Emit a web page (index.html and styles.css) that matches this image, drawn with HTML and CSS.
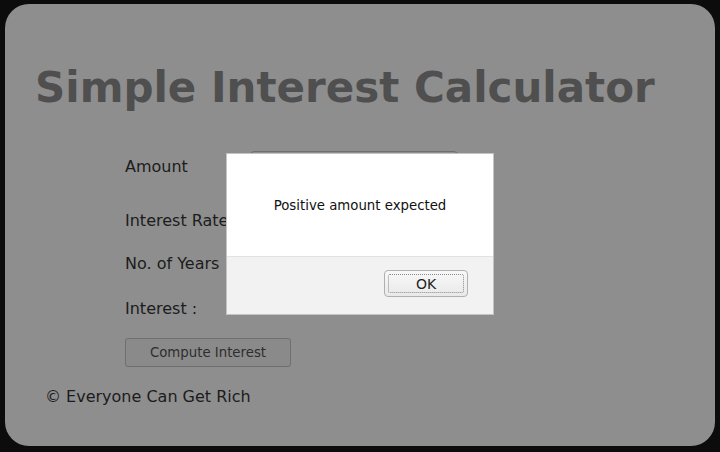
FILE: index.html
```html
<!DOCTYPE html>
<html>
<head>
<meta charset="utf-8">
<link rel="stylesheet" href="styles.css">
</head>
<body>
<div class="panel">
  <h1 class="title">Simple Interest Calculator</h1>
  <div class="form">
    <div class="row row-amount"><span class="label">Amount</span><span class="input"></span></div>
    <div class="row row-rate"><span class="label">Interest Rate</span></div>
    <div class="row row-years"><span class="label">No. of Years</span></div>
    <div class="row row-interest"><span class="label">Interest :</span></div>
    <div class="row row-btn"><button class="compute">Compute Interest</button></div>
  </div>
  <div class="footer">© Everyone Can Get Rich</div>
  <div class="dialog">
    <div class="dialog-body">Positive amount expected</div>
    <div class="dialog-foot"><button class="ok"><span class="ok-ring">OK</span></button></div>
  </div>
</div>
</body>
</html>
```

FILE: styles.css
```css
* { box-sizing: border-box; }
html, body { margin: 0; padding: 0; }
body {
  background: #0c0c0c;
  width: 720px;
  height: 452px;
  overflow: hidden;
  font-family: "DejaVu Sans", sans-serif;
  padding: 4px 5px 6px 5px;
}
.panel {
  position: relative;
  height: 442px;
  background: #8e8e8e;
  border-radius: 24px;
  padding: 59px 0 0 30px;
}
.title {
  margin: 0;
  font-size: 42px;
  font-weight: bold;
  color: #4f4f4f;
  line-height: 50px;
}
.form {
  margin: 0 0 0 90px;
  padding-top: 38px;
  display: flex;
  flex-direction: column;
}
.row {
  display: flex;
  align-items: center;
  font-size: 16px;
  color: #1c1c1c;
}
.label { width: 125px; }
.row-amount { height: 30px; }
.row-rate { height: 30px; margin-top: 24px; }
.row-years { height: 30px; margin-top: 13px; }
.row-interest { height: 30px; margin-top: 15px; }
.row-btn { margin-top: 15px; }
.input {
  width: 208px;
  height: 30px;
  border: 1px solid #6e6e6e;
  border-radius: 4px;
  background: #8e8e8e;
}
.compute {
  width: 166px;
  height: 29px;
  border: 1px solid #6f6f6f;
  border-radius: 3px;
  background: #8a8a8a;
  font-family: "DejaVu Sans", sans-serif;
  font-size: 13.3px;
  color: #2e2e2e;
  padding: 0;
}
.footer {
  margin: 20px 0 0 10px;
  font-size: 16px;
  color: #1c1c1c;
}
.dialog {
  position: absolute;
  left: 221px;
  top: 149px;
  width: 268px;
  height: 162px;
  background: #ffffff;
  border: 1px solid #c4c4c4;
  display: flex;
  flex-direction: column;
}
.dialog-body {
  height: 102px;
  display: flex;
  align-items: center;
  justify-content: center;
  font-size: 13.3px;
  color: #111;
  padding-top: 1px;
}
.dialog-foot {
  flex: 1;
  background: #f2f2f2;
  border-top: 1px solid #e2e2e2;
  display: flex;
  justify-content: flex-end;
  align-items: flex-start;
  padding: 13px 25px 0 0;
}
.ok {
  width: 84px;
  height: 27px;
  border: 1px solid #b0b0b0;
  border-radius: 4px;
  background: linear-gradient(#f8f8f8, #e9e9e9);
  padding: 3px;
  font-family: "DejaVu Sans", sans-serif;
  font-size: 14px;
  color: #222;
}
.ok-ring {
  display: flex;
  align-items: center;
  justify-content: center;
  width: 100%;
  height: 100%;
  border: 1px dotted #8a8a8a;
  border-radius: 2px;
}
```
